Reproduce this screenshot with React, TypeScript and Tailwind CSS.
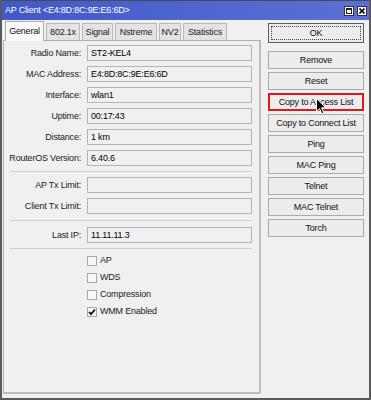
const fields1 = [
  ["Radio Name:", "ST2-KEL4"],
  ["MAC Address:", "E4:8D:8C:9E:E6:6D"],
  ["Interface:", "wlan1"],
  ["Uptime:", "00:17:43"],
  ["Distance:", "1 km"],
  ["RouterOS Version:", "6.40.6"],
];

const tabs = [
  { name: "General", w: "w-[39px]" },
  { name: "802.1x", w: "w-[34px]" },
  { name: "Signal", w: "w-[31px]" },
  { name: "Nstreme", w: "w-[42px]" },
  { name: "NV2", w: "w-[22px]" },
  { name: "Statistics", w: "w-[44px]" },
];

const buttons = [
  "Remove",
  "Reset",
  "Copy to Access List",
  "Copy to Connect List",
  "Ping",
  "MAC Ping",
  "Telnet",
  "MAC Telnet",
  "Torch",
];

function Field({ label, value, last }: { label: string; value: string; last?: boolean }) {
  return (
    <div className={`flex items-center h-[16px] ${last ? "" : "mb-[5px]"}`}>
      <div className="w-[78px] text-right pr-[1px] whitespace-nowrap text-[#222]">{label}</div>
      <div className="ml-[5px] w-[165px] h-[16px] border border-[#b4b4b4] bg-[#f0f0f0] flex items-center pl-[3px] text-black">
        {value}
      </div>
    </div>
  );
}

function Sep({ cls }: { cls: string }) {
  return <div className={`ml-[6px] mr-[7px] h-[1px] bg-[#cfcfcf] ${cls}`} />;
}

function Check({ label, checked }: { label: string; checked?: boolean }) {
  return (
    <div className="flex items-center h-[17px]">
      <div className="ml-[83px] w-[10px] h-[10px] border border-[#a9a9a9] bg-[#f7f7f7] flex items-center justify-center">
        {checked && (
          <svg width="8" height="8" viewBox="0 0 8 8">
            <path d="M1 4 L3 6.2 L7 1.5" fill="none" stroke="#111" strokeWidth="1.8" />
          </svg>
        )}
      </div>
      <span className="ml-[3px] text-[#222]">{label}</span>
    </div>
  );
}

export default function App() {
  return (
    <div className="relative w-[371px] h-[400px] bg-[#f0f0f0] border-x-2 border-b-2 border-[#5a5a5a] flex flex-col font-['Liberation_Sans',Arial,sans-serif] text-[9px] tracking-[-0.2px] leading-none">
      {/* title bar */}
      <div className="h-[20px] bg-gradient-to-r from-[#4059c8] to-[#5a70d4] border-t border-[#4a4a4a] flex items-center pl-[3px] pr-[2px]">
        <span className="text-white">AP Client &lt;E4:8D:8C:9E:E6:6D&gt;</span>
        <div className="ml-auto flex gap-[3px]">
          <div className="w-[10px] h-[10px] bg-white border border-[#333] flex items-center justify-center">
            <div className="w-[6px] h-[6px] border border-[#222] border-t-2" />
          </div>
          <div className="w-[10px] h-[10px] bg-white border border-[#333] flex items-center justify-center">
            <svg width="6" height="6" viewBox="0 0 6 6">
              <path d="M0.5 0.5 L5.5 5.5 M5.5 0.5 L0.5 5.5" stroke="#111" strokeWidth="1.6" />
            </svg>
          </div>
        </div>
      </div>

      {/* body */}
      <div className="flex flex-1 pl-[1px]">
        {/* left column */}
        <div className="w-[258px] flex flex-col">
          <div className="h-[20px] flex items-end gap-[2px] pl-[2px]">
            {tabs.map((t, i) =>
              i === 0 ? (
                <div
                  key={t.name}
                  className={`${t.w} h-[20px] -mb-[1px] relative z-10 bg-[#f9f9f9] border border-b-0 border-[#adadad] flex items-center justify-center text-[#111]`}
                >
                  {t.name}
                </div>
              ) : (
                <div
                  key={t.name}
                  className={`${t.w} h-[17px] bg-[#e3e3e3] border border-b-0 border-[#b9b9b9] flex items-center justify-center text-[#222]`}
                >
                  {t.name}
                </div>
              )
            )}
          </div>
          <div className="flex-1 mb-[4px] border border-[#b0b0b0] border-r-2 border-b-2 border-r-[#bdbdbd] border-b-[#bdbdbd] bg-[#f0f0f0] pt-[4px]">
            {fields1.map(([l, v], i) => (
              <Field key={l} label={l} value={v} last={i === fields1.length - 1} />
            ))}
            <Sep cls="mt-[5px]" />
            <div className="mt-[5px]">
              <Field label="AP Tx Limit:" value="" />
              <Field label="Client Tx Limit:" value="" last />
            </div>
            <Sep cls="mt-[6px]" />
            <div className="mt-[6px]">
              <Field label="Last IP:" value="11.11.11.3" last />
            </div>
            <Sep cls="mt-[5px]" />
            <div className="mt-[3px]">
              <Check label="AP" />
              <Check label="WDS" />
              <Check label="Compression" />
              <Check label="WMM Enabled" checked />
            </div>
          </div>
        </div>

        {/* right column */}
        <div className="ml-[7px] w-[96px] flex flex-col pt-[3px]">
          <div className="h-[20px] border border-[#5e5e5e] bg-[#ececec] p-[2px]">
            <div className="w-full h-full border border-dotted border-[#444] flex items-center justify-center text-[#111]">
              OK
            </div>
          </div>
          <div className="mt-[8px] flex flex-col gap-[3px]">
            {buttons.map((b) =>
              b === "Copy to Access List" ? (
                <div
                  key={b}
                  className="h-[18px] border-2 border-[#e3161d] bg-[#ececec] flex items-center justify-center text-[#111] whitespace-nowrap"
                >
                  {b}
                </div>
              ) : (
                <div
                  key={b}
                  className="h-[18px] border border-[#a9a9a9] bg-[#ececec] flex items-center justify-center text-[#111] whitespace-nowrap"
                >
                  {b}
                </div>
              )
            )}
          </div>
        </div>
      </div>

      {/* mouse cursor */}
      <svg className="absolute left-[314px] top-[98px]" width="11" height="17" viewBox="0 0 11 17">
        <path d="M0.5 0.5 L0.5 13.5 L3.6 10.6 L5.8 15.8 L7.8 15 L5.6 9.8 L9.8 9.8 Z" fill="#000" stroke="#fff" strokeWidth="1" />
      </svg>
    </div>
  );
}
